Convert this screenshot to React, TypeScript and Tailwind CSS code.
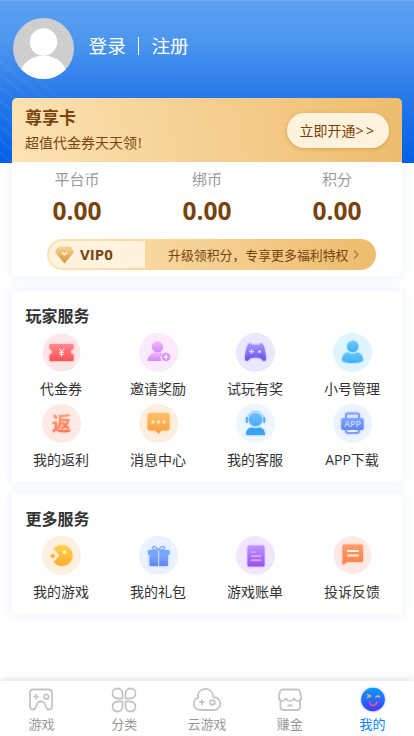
import type { ReactNode } from "react";

const Voucher = () => (
  <>
    <circle cx="19.5" cy="19.5" r="19" fill="#ffe6e6" />
    <g filter="url(#glow)">
      <path
        d="M8.500 11h22q1 0 1 1v4.200a2.600 2.600 0 0 0 0 5.200v5.600q0 1-1 1h-22q-1 0-1-1v-5.600a2.600 2.600 0 0 0 0-5.200V12q0-1 1-1z"
        fill="url(#red)"
      />
    </g>
    <path
      d="m17.200 15.500 2.300 3.500 2.300-3.500M19.500 19v4.500M17.300 19.300h4.400M17.300 21.300h4.400"
      stroke="#fff"
      strokeWidth="1"
      fill="none"
    />
  </>
);

const Invite = () => (
  <>
    <circle cx="19.5" cy="19.5" r="19.5" fill="#fae9ff" />
    <circle cx="18.500" cy="14" r="5.700" fill="url(#pink)" />
    <path
      d="M8.500 28c0-5 3.500-8 7-8.500h5.500c1.200.3 2.500.7 3 1.300a5 5 0 0 0-1.500 7.200z"
      fill="url(#pink)"
    />
    <circle cx="27" cy="24" r="4.300" fill="#d594fb" />
    <path d="M27 21.500v5M24.500 24h5" stroke="#fff" strokeWidth="1.200" />
  </>
);

const Trial = () => (
  <>
    <circle cx="19.5" cy="19.5" r="19.5" fill="#e9e8ff" />
    <g filter="url(#glow)">
      <path
        d="M13 10.500q1.500-.8 3 1.200h7q1.500-2 3-1.200c2.200 1.500 3 6 4 13.500.5 4.500-2.500 5-4.500 2-2-2-10-2-12 0-2 3-5 2.500-4.500-2 1-7.500 2-12 4-13.500z"
        fill="url(#violet)"
      />
    </g>
    <path d="M15.500 16v5M13 18.500h5" stroke="#d9d2ff" strokeWidth="1.300" />
    <circle cx="23.500" cy="18.500" r="1.500" fill="#d9d2ff" />
  </>
);

const Account = () => (
  <>
    <circle cx="19.5" cy="19.5" r="19.5" fill="#e0f4ff" />
    <g filter="url(#glow)" fill="url(#sky)">
      <circle cx="19.700" cy="13.500" r="5.700" />
      <path d="M9 27c0-4 2.500-7.500 6-7.500q4.500 2.500 9 0c3.500 0 6 3.500 6 7.500 0 4-21 4-21 0z" />
    </g>
  </>
);

const Rebate = () => (
  <>
    <circle cx="19.5" cy="19.5" r="19.5" fill="#ffe9e5" />
    <text
      x="19.500"
      y="26.500"
      textAnchor="middle"
      fontSize="19"
      fontWeight="700"
      fill="url(#coral)"
      filter="url(#glow)"
    >
      返
    </text>
  </>
);

const Message = () => (
  <>
    <circle cx="19.5" cy="19.5" r="19.5" fill="#fcefdf" />
    <g filter="url(#glow)">
      <path
        d="M10.500 9h18q2 0 2 2v13.500q0 2-2 2h-6l-3 3.300-3-3.300h-6q-2 0-2-2V11q0-2 2-2z"
        fill="url(#orange)"
      />
    </g>
    <g fill="#ffe8b8">
      <circle cx="14" cy="18" r="1.700" />
      <circle cx="19.500" cy="18" r="1.700" />
      <circle cx="25" cy="18" r="1.700" />
    </g>
  </>
);

const Support = () => (
  <>
    <circle cx="19.5" cy="19.5" r="19.5" fill="#edf6fe" />
    <g filter="url(#glow)">
      <circle cx="19.500" cy="15.500" r="6.800" fill="url(#azure)" />
      <path
        d="M11.200 15.500a8.300 8.300 0 0 1 16.600 0"
        fill="none"
        stroke="#8ccaff"
        strokeWidth="1"
      />
      <path
        d="M10.800 14v4M28.200 14v4"
        stroke="#58afff"
        strokeWidth="2"
        strokeLinecap="round"
      />
      <path
        d="M10 31c0-4 2-7.500 6-7.500l3.500 1 3.500-1c4 0 6 3.500 6 7.500z"
        fill="#37a2fa"
      />
    </g>
  </>
);

const Download = () => (
  <>
    <circle cx="19.5" cy="19.5" r="19.5" fill="#ecf2ff" />
    <g filter="url(#glow)">
      <path
        d="M13 15v-4q0-1.500 1.500-1.500h10q1.500 0 1.500 1.500v4M13 24v3q0 2 2 2h9q2 0 2-2v-3"
        fill="#d3e2ff"
        stroke="#7d9fff"
        strokeWidth="2"
      />
      <rect x="8.200" y="14" width="22.500" height="12" rx="2" fill="url(#blue)" />
    </g>
    <text
      x="19.500"
      y="23"
      textAnchor="middle"
      fontSize="8.800"
      fontWeight="600"
      fill="#c8d8ff"
    >
      APP
    </text>
    <path d="M16 26.300h7l-3.500 2z" fill="#fff" />
  </>
);

const MyGames = () => (
  <>
    <circle cx="19.5" cy="19.5" r="19.5" fill="#fcf0e0" />
    <g filter="url(#glow)">
      <path
        d="M17.500 19.500 11.800 13a10.500 10.500 0 1 1 0 13z"
        fill="url(#yellow)"
      />
      <circle cx="10.700" cy="20" r="2" fill="#ffb433" />
    </g>
    <circle cx="22.500" cy="16" r="1.800" fill="#fff5cf" />
  </>
);

const Gifts = () => (
  <>
    <circle cx="19.5" cy="19.5" r="19.5" fill="#eaf2ff" />
    <path
      d="M19.500 14c-3-5-7-4-6-1.500.500 1.500 3 1.500 6 1.500zm0 0c3-5 7-4 6-1.500-.5 1.500-3 1.500-6 1.500z"
      fill="none"
      stroke="#86adff"
      strokeWidth="1.400"
    />
    <g filter="url(#glow)">
      <rect x="9" y="14" width="21.500" height="5" rx="1" fill="#77a5ff" />
      <rect x="10.500" y="19" width="18.500" height="11" rx="1" fill="url(#blue)" />
    </g>
    <path d="M19.700 14.500V30" stroke="#dbe7ff" strokeWidth="1" />
  </>
);

const Bill = () => (
  <>
    <circle cx="19.5" cy="19.5" r="19.5" fill="#f0e7ff" />
    <g filter="url(#glow)">
      <rect x="11.500" y="9.500" width="17" height="21" rx="1.500" fill="url(#purple)" />
    </g>
    <path
      d="M15.500 16h3.500M15.500 20.200h9M15.500 24.200h9"
      stroke="#dfc4ff"
      strokeWidth="1.200"
      strokeLinecap="round"
    />
  </>
);

const Feedback = () => (
  <>
    <circle cx="19.5" cy="19" r="19" fill="#ffe9e6" />
    <g filter="url(#glow)">
      <path
        d="M11 8.500h17.500q1.500 0 1.500 1.500v14.500q0 1.500-1.500 1.500H14l-4.500 3V10q0-1.500 1.500-1.500z"
        fill="url(#flame)"
      />
    </g>
    <path
      d="M15 15h10M15 19.500h10"
      stroke="#fff0e6"
      strokeWidth="2"
      strokeLinecap="round"
    />
  </>
);

const gradients = [
  { id: "red", from: "#ff8b8d", to: "#ff5057" },
  { id: "pink", from: "#f7b5f4", to: "#cd8bff" },
  { id: "violet", from: "#a696ff", to: "#6652ec" },
  { id: "sky", from: "#69c9ff", to: "#3db0ee" },
  { id: "coral", from: "#ffa579", to: "#ff714f" },
  { id: "orange", from: "#ffc168", to: "#ff9c42" },
  { id: "azure", from: "#75bfff", to: "#4aa9fc" },
  { id: "blue", from: "#80a6ff", to: "#5d86fb" },
  { id: "yellow", from: "#ffd34d", to: "#ffac30" },
  { id: "purple", from: "#bd92ff", to: "#9d50ec" },
  { id: "flame", from: "#ff9c69", to: "#ff8142" },
  { id: "gem", from: "#f8d698", to: "#d99531" },
  { id: "face", from: "#0a9dff", to: "#403cff" },
];

const Defs = () => (
  <svg className="absolute h-0 w-0">
    <defs>
      {gradients.map((g) => (
        <linearGradient key={g.id} id={g.id} x1="0" y1="0" x2="0" y2="1">
          <stop stopColor={g.from} />
          <stop offset="1" stopColor={g.to} />
        </linearGradient>
      ))}
      <filter
        id="glow"
        x="-30%"
        y="-30%"
        width="160%"
        height="160%"
        colorInterpolationFilters="sRGB"
      >
        <feGaussianBlur in="SourceGraphic" stdDeviation="1.3" result="b" />
        <feComponentTransfer in="b" result="c">
          <feFuncA type="linear" slope="0.6" />
        </feComponentTransfer>
        <feMerge>
          <feMergeNode in="c" />
          <feMergeNode in="SourceGraphic" />
        </feMerge>
      </filter>
    </defs>
  </svg>
);

type Item = { label: string; icon: ReactNode };

const playerItems: Item[] = [
  { label: "代金券", icon: <Voucher /> },
  { label: "邀请奖励", icon: <Invite /> },
  { label: "试玩有奖", icon: <Trial /> },
  { label: "小号管理", icon: <Account /> },
  { label: "我的返利", icon: <Rebate /> },
  { label: "消息中心", icon: <Message /> },
  { label: "我的客服", icon: <Support /> },
  { label: "APP下载", icon: <Download /> },
];

const moreItems: Item[] = [
  { label: "我的游戏", icon: <MyGames /> },
  { label: "我的礼包", icon: <Gifts /> },
  { label: "游戏账单", icon: <Bill /> },
  { label: "投诉反馈", icon: <Feedback /> },
];

const Services = ({ title, items, style }: { title: string; items: Item[]; style: string }) => (
  <section
    className={`mx-3 bg-white pt-[14px] shadow-[0_0_12px_2px_#edf3ff] ${style}`}
  >
    <h2 className="pl-[13.500px] text-[16px] leading-[22px] font-bold text-[#333]">
      {title}
    </h2>
    <div className="mt-[6px] grid grid-cols-4 gap-y-px px-px">
      {items.map((item) => (
        <div key={item.label} className="flex h-[70px] flex-col items-center">
          <svg className="h-[39px] w-[39px] shrink-0" viewBox="0 0 39 39">
            {item.icon}
          </svg>
          <span className="mt-[7px] -ml-px text-[14px] leading-5 whitespace-nowrap text-[#333]">
            {item.label}
          </span>
        </div>
      ))}
    </div>
  </section>
);

const tabs: Item[] = [
  {
    label: "游戏",
    icon: (
      <>
        <path d="M6.500 3.500h15q3.500 0 3.500 3.500v13q0 3.500-3 3.500-2.500 0-3.500-4c-.8-3.500-2-4-4.500-4s-3.700.5-4.500 4c-1 4-3.500 4-3.500 4Q3 23.500 3 20V7q0-3.500 3.500-3.500z" />
        <path d="M9.200 8v5.500M6.500 10.700H12" />
        <circle cx="19.300" cy="10.700" r="2.300" />
      </>
    ),
  },
  {
    label: "分类",
    icon: (
      <path d="M12.500 12.500V7.500a5 5 0 1 0-5 5zM15.500 12.500V7.500a5 5 0 1 1 5 5zM12.500 15.500v4.500a5 5 0 1 1-5-4.500zM15.500 15.500v4.500a5 5 0 1 0 5-4.500z" />
    ),
  },
  {
    label: "云游戏",
    icon: (
      <>
        <path d="M8 24C-.5 24-1.500 13.500 5 12 3.500 2 16.500-.5 20 8.500q.5 2 .3 2.800C29 10.500 30 24 20.500 24z" />
        <path d="M9 13.500v5.500M6.300 16.200h5.400" />
        <circle cx="19.500" cy="16.500" r="2.300" />
      </>
    ),
  },
  {
    label: "赚金",
    icon: (
      <>
        <path d="M6.500 3.500h15q2 0 2.500 2l1 4.500v3L24 15v6q0 3-3 3H7.500q-3 0-3-3v-6L3 13v-3l1-4.500q.5-2 2.500-2z" />
        <path d="M3 12.500c2 3.500 5 3 7 0 2 3.500 6 3.500 8 0 2 3.500 5 3.500 7 0M11.500 19.500h5" />
      </>
    ),
  },
];

const Face = () => (
  <svg className="h-7 w-7 overflow-visible" viewBox="0 0 28 28">
    <circle cx="14" cy="13.500" r="11.800" fill="url(#face)" filter="url(#glow)" />
    <g fill="none" strokeLinecap="round" strokeLinejoin="round">
      <path d="m8.500 8.500 3.300 1.700-3.300 1.500M17 11q2-2 3.500 0" stroke="#efb86a" strokeWidth="1.400" />
      <path d="M10.500 16q.5 3.500 3.500 3.500t4-3.500" stroke="#f0507c" strokeWidth="1.600" />
    </g>
  </svg>
);

const TabBar = () => (
  <nav className="grid h-[55px] grid-cols-5 bg-white shadow-[0_0_8px_#d0d4db]">
    {tabs.map((tab) => (
      <div key={tab.label} className="flex flex-col items-center pt-[5px]">
        <svg
          className="h-7 w-7"
          viewBox="0 0 28 28"
          fill="none"
          stroke="#c4c5c9"
          strokeWidth="1.800"
          strokeLinejoin="round"
        >
          {tab.icon}
        </svg>
        <span className="text-[13px] leading-5 text-[#999]">{tab.label}</span>
      </div>
    ))}
    <div className="flex flex-col items-center pt-[5px]">
      <Face />
      <span className="text-[13px] leading-5 text-[#0883ff]">我的</span>
    </div>
  </nav>
);

const Header = () => (
  <header className="relative z-10 h-[163px] shrink-0 border-t border-[#78a9e5] bg-[linear-gradient(180deg,#5ca1f2_0%,#4c96ef_25%,#2778e9_60%,#005fe9_100%)]">
    <div className="absolute bottom-0 left-0 h-[110px] w-[120px] bg-[repeating-linear-gradient(40deg,transparent_0_6px,#ffffff12_8px,transparent_10px)] [mask-image:linear-gradient(50deg,#000_30%,transparent_75%)]" />
    <div className="relative">
      <div className="flex h-[97px] items-start pt-[17px] pl-[13px]">
        <svg className="h-[61px] w-[61px]" viewBox="0 0 61 61">
          <clipPath id="avatar">
            <circle cx="30.500" cy="30.500" r="30.500" />
          </clipPath>
          <g clipPath="url(#avatar)">
            <rect width="61" height="61" fill="#cecece" />
            <circle cx="30.500" cy="24" r="13.700" fill="#fff" />
            <ellipse cx="30.500" cy="59" rx="24" ry="21.500" fill="#fff" />
          </g>
        </svg>
        <div className="mt-[14px] ml-[14.500px] flex items-center text-[18.700px] leading-7 text-white">
          <span>登录</span>
          <span className="mx-[12px] h-[18px] w-[1.500px] bg-white" />
          <span>注册</span>
        </div>
      </div>
      <div className="mx-3 border-b border-white">
        <div className="flex h-16 items-center justify-between rounded-t-[5px] bg-[linear-gradient(80deg,#fee3b5,#edbc6d)] pr-[13px] pl-[13px] text-[#7a4410]">
          <div className="-mt-[2px]">
            <h1 className="text-[17px] leading-6 font-bold">尊享卡</h1>
            <p className="mt-[3px] text-[14px] leading-5">
              超值代金券天天领<span className="ml-[1px]">!</span>
            </p>
          </div>
          <div className="flex h-[35px] w-[102px] items-center justify-center rounded-full bg-[#fff3df] text-[14px] text-[#7b3f00] shadow-[0_1px_4px_#d9a04c]">
            立即开通<span className="tracking-[2.500px]">&gt;&gt;</span>
          </div>
        </div>
      </div>
    </div>
  </header>
);

const stats = ["平台币", "绑币", "积分"];

const Wallet = () => (
  <section className="mx-3 h-[113px] shrink-0 rounded-b-[5px] bg-white shadow-[0_0_12px_2px_#edf3ff]">
    <div className="grid grid-cols-3 pt-[5px] text-center">
      {stats.map((name) => (
        <div key={name}>
          <p className="text-[15px] leading-[22px] text-[#999]">{name}</p>
          <p className="mt-[3px] text-[24.500px] leading-9 font-bold text-[#77430f]">
            0.00
          </p>
        </div>
      ))}
    </div>
    <div className="mt-[10px] ml-[35px] flex h-[31px] w-[329px] items-center rounded-full bg-[linear-gradient(80deg,#fee3b5,#edbc6d)] p-[2px] text-[#77430f]">
      <div className="flex h-[27px] w-[96px] items-center rounded-l-full bg-[#fff3df] pl-[6px]">
        <svg className="h-[18px] w-[19px]" viewBox="0 0 19 18">
          <path
            d="M4.500.5h10Q16 .5 17 2l1.500 3q.5 1.300-.5 2.500l-8 9.500q-.5.500-1 0L1 7.500Q0 6.500.5 5L2 2Q3 .5 4.500.5z"
            fill="url(#gem)"
          />
          <path d="m7 6.500 2.500 2.300L12 6.500" stroke="#fff3df" strokeWidth="1.500" fill="none" />
        </svg>
        <span className="ml-[6px] text-[15px] font-bold">VIP0</span>
      </div>
      <span className="mt-[2px] ml-[23px] text-[12.900px] whitespace-nowrap">
        升级领积分，专享更多福利特权
      </span>
      <svg className="ml-[4px] h-[9px] w-[8px]" viewBox="0 0 8 9">
        <path d="m2 .5 4 4-4 4" stroke="#ad7c3e" strokeWidth="1.300" fill="none" />
      </svg>
    </div>
  </section>
);

const App = () => {
  return (
    <div
      lang="zh-CN"
      className="flex h-[736px] w-[414px] flex-col overflow-hidden bg-white font-['Open_Sans','Noto_Sans_CJK_SC',sans-serif]"
    >
      <Defs />
      <Header />
      <Wallet />
      <Services title="玩家服务" items={playerItems} style="mt-[15px] h-[191px] shrink-0" />
      <Services title="更多服务" items={moreItems} style="mt-3 h-[120px] shrink-0" />
      <div className="mt-auto">
        <TabBar />
      </div>
    </div>
  );
};

export default App;
